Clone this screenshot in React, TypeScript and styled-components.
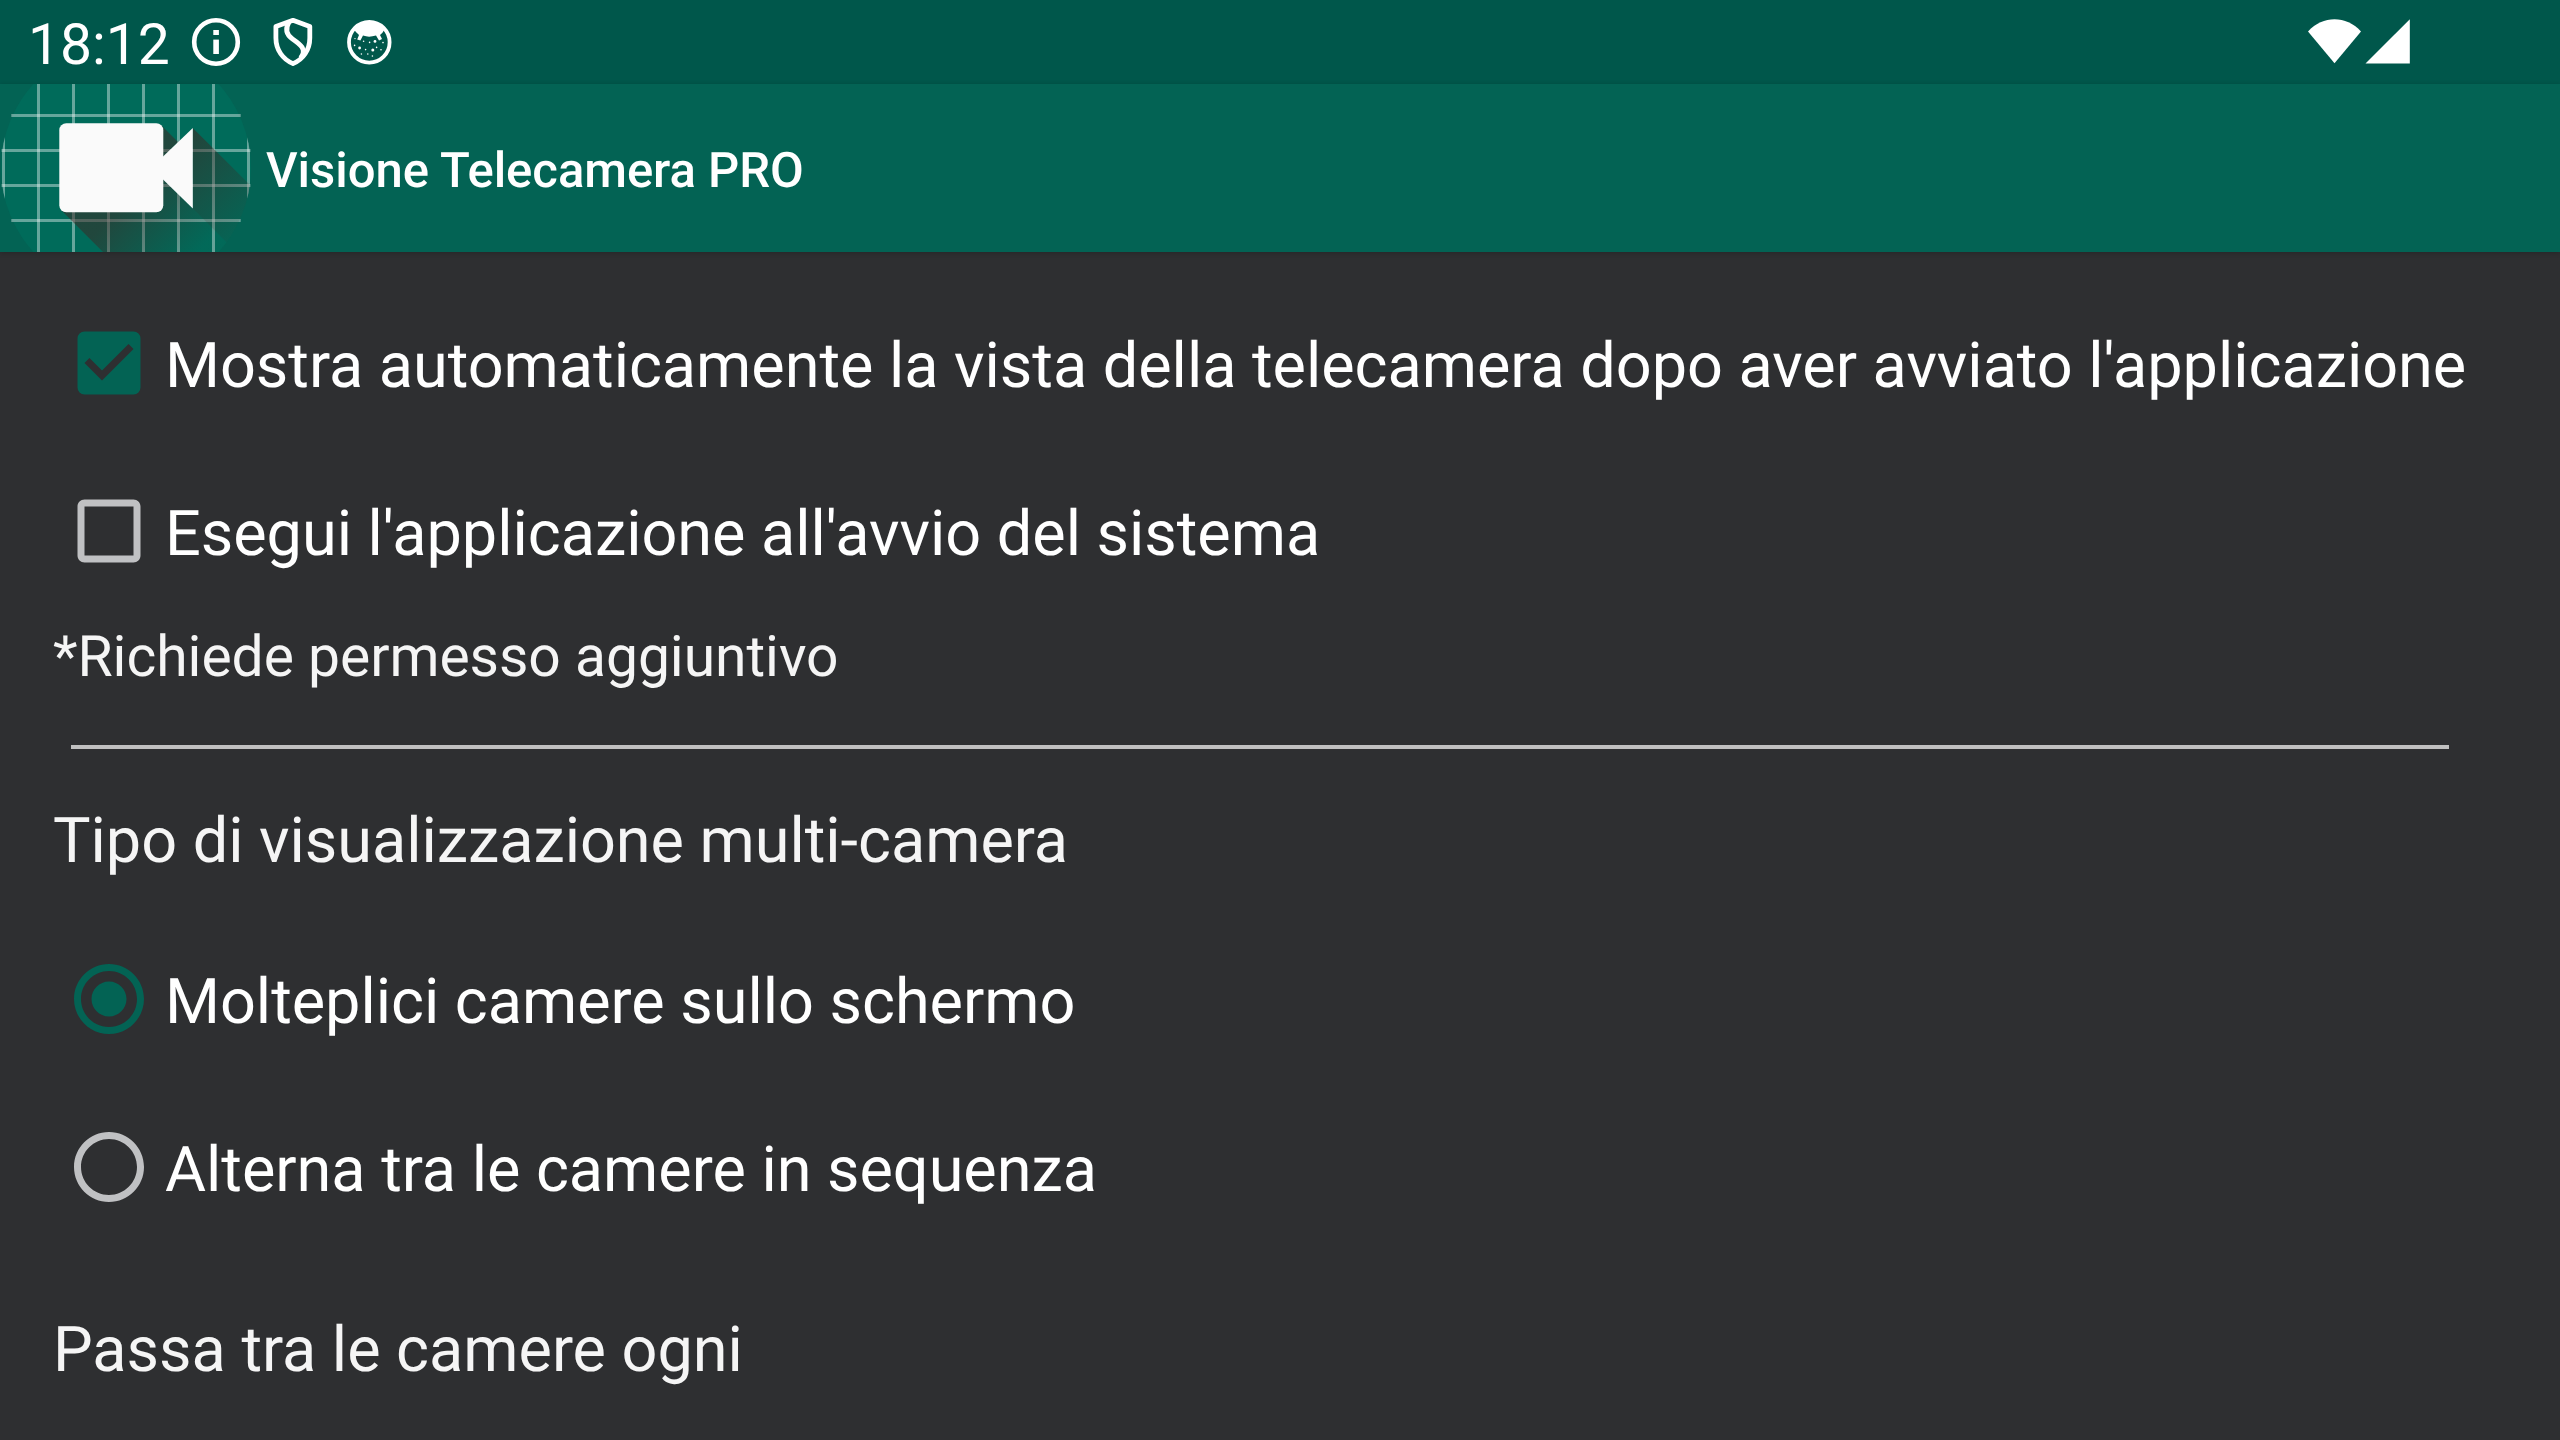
import type { IconType } from "react-icons";
import {
  MdCheckBox,
  MdCheckBoxOutlineBlank,
  MdRadioButtonChecked,
  MdRadioButtonUnchecked,
} from "react-icons/md";
import styled, { createGlobalStyle } from "styled-components";

const GlobalStyle = createGlobalStyle`
  * {
    box-sizing: border-box;
  }

  body {
    margin: 0;
    background-color: #2e2f31;
    font-family: Roboto, "Noto Sans", sans-serif;
    text-rendering: geometricPrecision;
    letter-spacing: -0.035px;
    overflow: hidden;
  }
`;

const S_Screen = styled.div`
  display: flex;
  flex-direction: column;
  width: 2560px;
  height: 1440px;
  overflow: hidden;
  background-color: #2e2f31;
  color: white;
`;

const S_StatusBar = styled.div`
  display: flex;
  align-items: center;
  flex: none;
  height: 84px;
  padding-left: 28px;
  padding-right: 150px;
  background-color: #00574b;
`;

const S_Clock = styled.span`
  width: 149px;
  font-size: 57px;
  line-height: 84px;
  padding-top: 5px;
  white-space: nowrap;
`;

const S_StatusIcons = styled.div`
  display: flex;
  flex: 1;
  margin-left: 9px;
`;

const S_Signals = styled.div`
  display: flex;
`;

const S_AppBar = styled.header`
  display: flex;
  align-items: center;
  flex: none;
  height: 168px;
  background-color: #036354;
  box-shadow: 0 1px 5px rgba(0, 0, 0, 0.2);
`;

const S_Title = styled.h1`
  margin: 0;
  padding: 6px 0 0 14px;
  font-size: 49px;
  font-weight: 500;
  line-height: 60px;
`;

const S_Content = styled.main`
  display: flex;
  flex-direction: column;
  padding: 27px 53px 0;
`;

const S_Option = styled.label<{ $on: boolean }>`
  display: flex;
  align-items: center;
  height: 168px;
  font-size: 63px;
  white-space: nowrap;

  svg {
    flex: none;
    width: 84px;
    height: 84px;
    margin: 0 14px;
    color: ${({ $on }) => ($on ? "#036354" : "#c0c1c3")};
  }
`;

const S_OptionText = styled.span`
  padding-top: 6px;
`;

const S_RadioGroup = styled.div`
  margin-top: 31px;
`;

const S_Label = styled.p<{ $size?: number; $top: number }>`
  margin: ${({ $top }) => $top}px 0 0;
  font-size: ${({ $size }) => $size ?? 63}px;
  line-height: 84px;
  color: #f5f5f5;
`;

const S_Divider = styled.hr`
  width: 2378px;
  height: 4px;
  margin: 46px 0 0 18px;
  border: none;
  background-color: #c0c0c0;
`;

const InfoIcon = () => (
  <svg width="78" height="84" viewBox="0 0 78 84" fill="white">
    <circle cx="30" cy="42" r="21.8" fill="none" stroke="white" strokeWidth="4.6" />
    <rect x="27.3" y="30" width="5.6" height="5" />
    <rect x="27.3" y="39.6" width="5.6" height="14.4" />
  </svg>
);

const ShieldIcon = () => (
  <svg
    width="78"
    height="84"
    viewBox="0 0 78 84"
    fill="none"
    stroke="white"
    strokeWidth="4.8"
    strokeLinejoin="round"
  >
    <path d="M29 20.3L45.8 26.5V38C45.8 50 39 59.5 29 63.6C19 59.5 11.9 50 11.9 38V26.5Z" />
    <path d="M25 22C21 29 22 34.5 28.5 39C36.5 44.5 43.5 49.5 36.5 58" />
  </svg>
);

const CatIcon = () => (
  <svg width="78" height="84" viewBox="0 0 78 84" fill="white">
    <circle cx="27.3" cy="42.3" r="20.3" fill="none" stroke="white" strokeWidth="3.8" />
    <path d="M12 29C17 19 38 19 42.5 29C41.5 31.5 40 33.5 38 35L40 39L37 40.5L34 35.6C29 37 25 37 21 35.6L18.4 40.5L15.2 39.5L17 35C15 33 13 31.5 12 29Z" />
    <circle cx="33" cy="41.4" r="1.4" />
    <circle cx="17.6" cy="48" r="1.4" />
    <circle cx="30.8" cy="50" r="1.5" />
    <circle cx="21.6" cy="41.2" r="0.8" />
    <circle cx="27.6" cy="42.4" r="0.8" />
    <circle cx="41" cy="42.6" r="0.8" />
    <circle cx="12.6" cy="45.4" r="0.8" />
    <circle cx="23.6" cy="49.6" r="0.8" />
    <circle cx="34.6" cy="47.4" r="0.8" />
    <circle cx="39" cy="49.8" r="0.8" />
    <circle cx="19.4" cy="54" r="0.8" />
    <circle cx="25.8" cy="54" r="0.8" />
    <circle cx="30.4" cy="56" r="0.8" />
    <circle cx="13" cy="38.6" r="0.7" />
  </svg>
);

const WifiIcon = () => (
  <svg width="58" height="84" viewBox="0 0 58 84" fill="white">
    <path d="M29.5 63.3L3 31.4C18 15.2 41 15.2 56 31.4Z" />
  </svg>
);

const CellIcon = () => (
  <svg width="47" height="84" viewBox="0 0 47 84" fill="white">
    <path d="M2.5 63.6L46.8 19.3V63.6Z" />
  </svg>
);

const COLUMNS = [3.5, 38.5, 73.5, 108.5, 143.5, 178.5, 213.5, 248.5];
const ROWS = [
  { y: 115.5, inset: 11.3 },
  { y: 150.5, inset: 1.6 },
  { y: 185.5, inset: 1.6 },
  { y: 220.5, inset: 11.3 },
];

// The round launcher icon is taller than the bar, so only its middle shows.
const LauncherIcon = () => (
  <svg width="252" height="168" viewBox="0 84 252 168">
    <defs>
      <clipPath id="disc">
        <circle cx="126" cy="168" r="125" />
      </clipPath>
      <linearGradient
        id="bodyShade"
        gradientUnits="userSpaceOnUse"
        x1="140"
        y1="188"
        x2="200"
        y2="248"
      >
        <stop offset="0" stopColor="#3e2723" stopOpacity="0.53" />
        <stop offset="1" stopColor="#3e2723" stopOpacity="0.03" />
      </linearGradient>
      <linearGradient
        id="lensShade"
        gradientUnits="userSpaceOnUse"
        x1="164"
        y1="164"
        x2="240"
        y2="240"
      >
        <stop offset="0" stopColor="#3e2723" stopOpacity="0.56" />
        <stop offset="1" stopColor="#3e2723" stopOpacity="0.08" />
      </linearGradient>
    </defs>
    <g clipPath="url(#disc)">
      <rect y="84" width="252" height="168" fill="#006b5a" />
    </g>
    <g stroke="white" strokeOpacity="0.4" strokeWidth="3">
      <g clipPath="url(#disc)">
        {COLUMNS.map((x) => (
          <line key={x} x1={x} x2={x} y1="84" y2="252" />
        ))}
      </g>
      {ROWS.map(({ y, inset }) => (
        <line key={y} x1={inset} x2={252 - inset} y1={y} y2={y} />
      ))}
    </g>
    <g clipPath="url(#disc)">
      <path
        d="M61.5 210.5L161 125L178 142L162 158V178L192.8 208.5L262 278H129Z"
        fill="url(#bodyShade)"
      />
      <path d="M192.8 128L320 255V336L192.8 208.5Z" fill="url(#lensShade)" />
    </g>
    <rect x="59.3" y="123.3" width="104" height="89" rx="7" fill="#fafafa" />
    <path d="M162 157.5L192.8 128V208.5L162 178.5Z" fill="#fafafa" />
  </svg>
);

interface OptionProps {
  icon: IconType;
  text: string;
  on?: boolean;
}

const Option = ({ icon: Icon, text, on = false }: OptionProps) => (
  <S_Option $on={on}>
    <Icon />
    <S_OptionText>{text}</S_OptionText>
  </S_Option>
);

const App = () => {
  return (
    <>
      <GlobalStyle />
      <S_Screen>
        <S_StatusBar>
          <S_Clock>18:12</S_Clock>
          <S_StatusIcons>
            <InfoIcon />
            <ShieldIcon />
            <CatIcon />
          </S_StatusIcons>
          <S_Signals>
            <WifiIcon />
            <CellIcon />
          </S_Signals>
        </S_StatusBar>
        <S_AppBar>
          <LauncherIcon />
          <S_Title>Visione Telecamera PRO</S_Title>
        </S_AppBar>
        <S_Content>
          <Option
            icon={MdCheckBox}
            text="Mostra automaticamente la vista della telecamera dopo aver avviato l'applicazione"
            on
          />
          <Option
            icon={MdCheckBoxOutlineBlank}
            text="Esegui l'applicazione all'avvio del sistema"
          />
          <S_Label $size={57} $top={0}>
            *Richiede permesso aggiuntivo
          </S_Label>
          <S_Divider />
          <S_Label $top={51}>Tipo di visualizzazione multi-camera</S_Label>
          <S_RadioGroup>
            <Option
              icon={MdRadioButtonChecked}
              text="Molteplici camere sullo schermo"
              on
            />
            <Option
              icon={MdRadioButtonUnchecked}
              text="Alterna tra le camere in sequenza"
            />
          </S_RadioGroup>
          <S_Label $top={58}>Passa tra le camere ogni</S_Label>
        </S_Content>
      </S_Screen>
    </>
  );
};

export default App;
